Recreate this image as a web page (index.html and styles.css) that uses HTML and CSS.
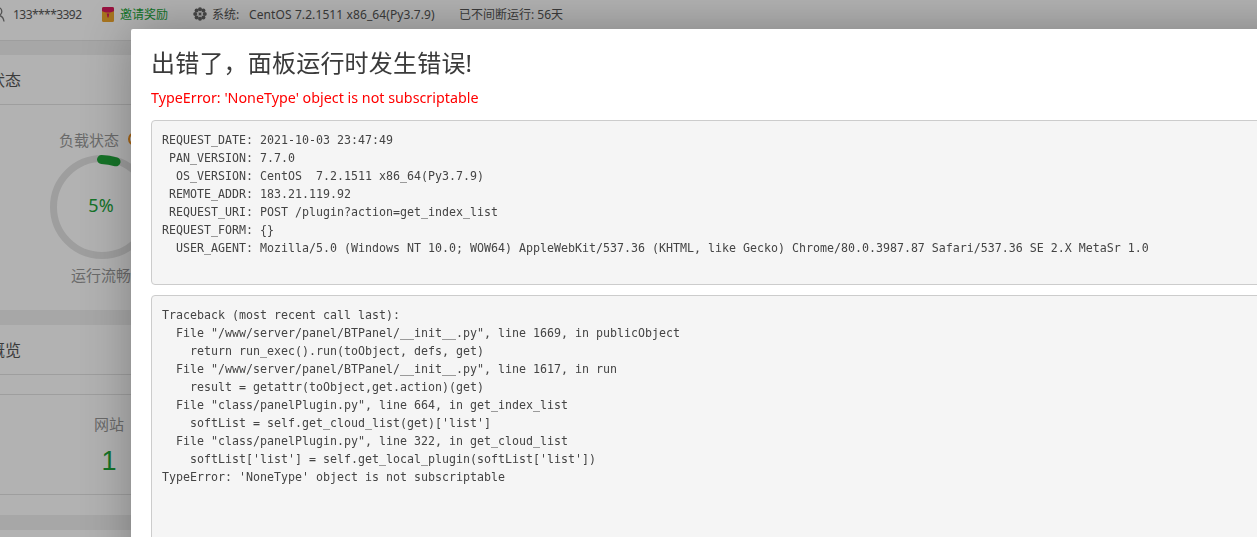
FILE: index.html
```html
<!DOCTYPE html>
<html lang="zh-CN">
<head>
<meta charset="utf-8">
<title>面板错误</title>
<link rel="stylesheet" href="styles.css">
</head>
<body>
<div class="page">
  <header class="topbar">
    <svg class="icon-user" width="14" height="15" viewBox="0 0 14 15"><circle cx="7" cy="4.500" r="3.800" fill="none" stroke="#777" stroke-width="1.300"/><path d="M1 14.500c.5-3.500 2.500-6 6-6s5.500 2.500 6 6" fill="none" stroke="#777" stroke-width="1.300"/></svg>
    <span class="phone">133****3392</span>
    <span class="invite">
      <svg width="12" height="15" viewBox="0 0 12 15"><rect width="12" height="15" rx="1.500" fill="#eea62e"/><path d="M0 1.500A1.500 1.500 0 0 1 1.500 0h9A1.500 1.500 0 0 1 12 1.500V4c-2 1.200-4 1.600-6 1.600S2 5.200 0 4z" fill="#d81b5e"/><path d="M4.700 6.500h2.600L6.500 10.500h-1z" fill="#d81b5e"/></svg>
      <span class="invite-text">邀请奖励</span>
    </span>
    <svg class="icon-gear" width="14" height="14" viewBox="0 0 14 14"><g fill="#666"><circle cx="7" cy="2.200" r="2"/><circle cx="7" cy="11.800" r="2"/><circle cx="2.200" cy="7" r="2"/><circle cx="11.800" cy="7" r="2"/><circle cx="3.600" cy="3.600" r="2"/><circle cx="10.400" cy="3.600" r="2"/><circle cx="3.600" cy="10.400" r="2"/><circle cx="10.400" cy="10.400" r="2"/></g><circle cx="7" cy="7" r="2.600" fill="#ccc"/><circle cx="7" cy="7" r="1.200" fill="#666"/></svg>
    <span class="sys-label">系统:</span>
    <span class="sys-value">CentOS 7.2.1511 x86_64(Py3.7.9)</span>
    <span class="uptime">已不间断运行: 56天</span>
  </header>

  <section class="card card-status">
    <h2 class="card-title">系统状态</h2>
    <div class="gauge">
      <div class="gauge-label"><span>负载状态</span><i class="gauge-tip"></i></div>
      <div class="gauge-ring">
        <svg width="104" height="104" viewBox="0 0 104 104"><circle cx="52" cy="52" r="48.500" fill="none" stroke="#e3e3e3" stroke-width="7"/><path d="M51.500 4.500Q59 4.800 66 6.800" fill="none" stroke="#20a53a" stroke-width="9" stroke-linecap="round"/></svg>
        <span class="gauge-value">5%</span>
      </div>
      <div class="gauge-state">运行流畅</div>
    </div>
  </section>

  <section class="card card-overview">
    <h2 class="card-title">概览</h2>
    <div class="overview-band"></div>
    <div class="stat">
      <div class="stat-name">网站</div>
      <div class="stat-num">1</div>
    </div>
  </section>

  <section class="card card-next"></section>
</div>

<div class="shade"></div>

<div class="modal">
  <h1 class="err-title">出错了，面板运行时发生错误!</h1>
  <p class="err-msg">TypeError: 'NoneType' object is not subscriptable</p>
  <pre class="log">REQUEST_DATE: 2021-10-03 23:47:49
 PAN_VERSION: 7.7.0
  OS_VERSION: CentOS  7.2.1511 x86_64(Py3.7.9)
 REMOTE_ADDR: 183.21.119.92
 REQUEST_URI: POST /plugin?action=get_index_list
REQUEST_FORM: {}
  USER_AGENT: Mozilla/5.0 (Windows NT 10.0; WOW64) AppleWebKit/537.36 (KHTML, like Gecko) Chrome/80.0.3987.87 Safari/537.36 SE 2.X MetaSr 1.0

</pre>
  <pre class="log log-trace">Traceback (most recent call last):
  File "/www/server/panel/BTPanel/__init__.py", line 1669, in publicObject
    return run_exec().run(toObject, defs, get)
  File "/www/server/panel/BTPanel/__init__.py", line 1617, in run
    result = getattr(toObject,get.action)(get)
  File "class/panelPlugin.py", line 664, in get_index_list
    softList = self.get_cloud_list(get)['list']
  File "class/panelPlugin.py", line 322, in get_cloud_list
    softList['list'] = self.get_local_plugin(softList['list'])
TypeError: 'NoneType' object is not subscriptable
</pre>
</div>
</body>
</html>
```

FILE: styles.css
```css
* { box-sizing: border-box; }
html, body { margin: 0; height: 100%; overflow: hidden; }
body {
  background: #f0f0f0;
  color: #555;
  font-family: "Noto Sans", "Noto Sans CJK SC", sans-serif;
  font-size: 12px;
}
.page { height: 537px; overflow: hidden; }

.topbar {
  display: flex;
  align-items: center;
  height: 41px;
  padding-bottom: 12px;
  background: #fff;
  border-bottom: 1px solid #e3e3e3;
  white-space: nowrap;
}
.icon-user { margin-left: -9px; flex: none; }
.phone { margin-left: 8px; width: 89px; letter-spacing: -.55px; }
.invite { display: flex; align-items: center; gap: 6px; width: 91px; }
.invite-text { color: #20a53a; }
.icon-gear { flex: none; }
.sys-label { margin-left: 5px; width: 37px; }
.sys-value { width: 210px; letter-spacing: .1px; }

.card { background: #fff; margin-top: 15px; }
.topbar + .card { margin-top: 14px; }
.card-title {
  margin: 0 0 0 -43px;
  height: 50px;
  line-height: 50px;
  font-size: 16px;
  font-weight: 400;
  color: #555;
  border-bottom: 1px solid #e3e3e3;
}
.card-overview .card-title { margin-left: -11px; }
.card-status { height: 255px; }
.card-overview { position: relative; height: 190px; }
.card-overview::after { content: ""; position: absolute; left: 0; right: 0; top: 169px; border-top: 1px solid #e3e3e3; }
.card-next { height: 20px; }

.gauge { width: 120px; margin-left: 42px; padding-top: 24px; text-align: center; }
.gauge-label {
  display: flex;
  align-items: center;
  gap: 9px;
  height: 20px;
  padding-left: 17px;
  font-size: 15px;
  color: #999;
  white-space: nowrap;
}
.gauge-tip {
  flex: none;
  width: 14px;
  height: 14px;
  border: 2px solid #f0911e;
  border-radius: 50%;
}
.gauge-ring {
  position: relative;
  width: 104px;
  height: 104px;
  margin: 6px 0 0 8px;
}
.gauge-ring svg { display: block; }
.gauge-value {
  position: absolute;
  inset: 0 2px 4px 0;
  display: flex;
  align-items: center;
  justify-content: center;
  font-size: 18px;
  color: #20a53a;
}
.gauge-state { margin-top: 6px; padding-right: 2px; font-size: 15px; line-height: 20px; color: #999; }

.overview-band { height: 20px; border-bottom: 1px solid #e3e3e3; }
.stat { width: 60px; height: 100px; margin-left: 79px; text-align: center; }
.stat-name { padding-top: 18px; font-size: 15px; line-height: 22px; color: #999; }
.stat-num { margin-top: 10px; font-family: "Liberation Sans", sans-serif; font-size: 27px; line-height: 32px; color: #20a53a; }

.shade { position: fixed; inset: 0; background: rgba(0, 0, 0, .3); }

.modal {
  position: absolute;
  left: 131px;
  top: 29px;
  width: 1300px;
  height: 700px;
  padding: 17px 20px;
  background: #fff;
  border-radius: 2px;
  box-shadow: 1px 1px 50px rgba(0, 0, 0, .3);
}
.err-title { margin: 0 0 8px; font-size: 24px; line-height: 34px; font-weight: 400; letter-spacing: .2px; color: #3a3a3a; }
.err-msg { margin: 0 0 12px; font-size: 14.300px; line-height: 20px; color: #f00; }
.log {
  margin: 0 0 10px;
  padding: 9.500px 9.500px 9.500px 10px;
  background: #f5f5f5;
  border: 1px solid #ccc;
  border-radius: 4px;
  color: #444;
  font-family: "DejaVu Sans Mono", monospace;
  font-size: 11.630px;
  line-height: 18px;
}
.log-trace { min-height: 400px; }
```
